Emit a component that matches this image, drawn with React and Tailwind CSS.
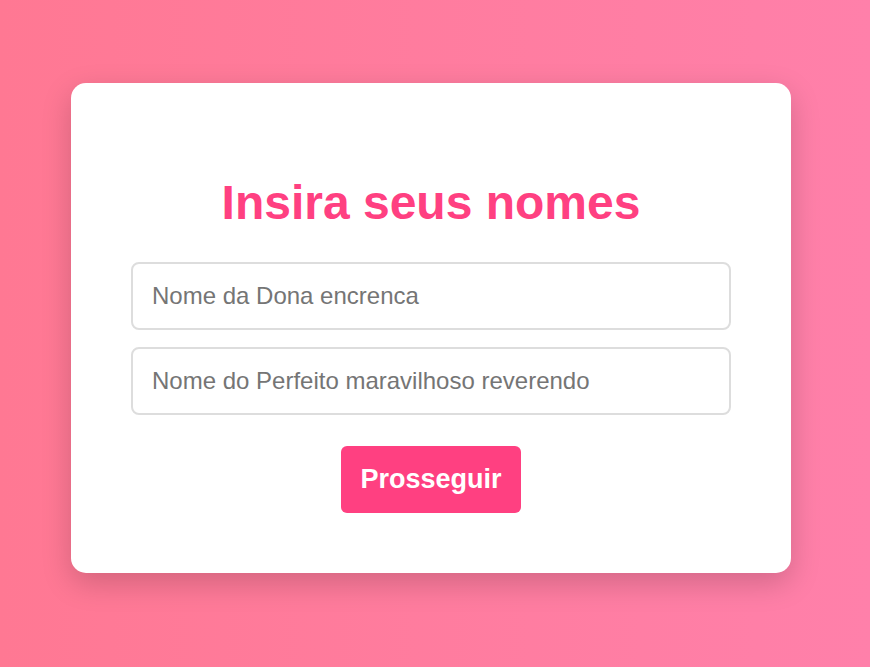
import React, { useState } from "react";

export default function App() {
  const [dona, setDona] = useState("");
  const [reverendo, setReverendo] = useState("");

  return (
    <div className="font-['Liberation_Sans',Arial,sans-serif] h-[667px] w-full bg-gradient-to-r from-[#ff7893] to-[#ff80aa] pt-[83px] pl-[71px]">
      {/* Card */}
      <div className="w-[720px] h-[490px] bg-white rounded-[15px] shadow-[0_10px_30px_rgba(0,0,0,0.18)] px-[60px] pt-[92px] pb-[60px] flex flex-col items-center">
        <h1 className="text-[48px] leading-[55px] font-bold text-[#ff4081] text-center">
          Insira seus nomes
        </h1>

        <input
          type="text"
          value={dona}
          onChange={(e) => setDona(e.target.value)}
          placeholder="Nome da Dona encrenca"
          className="mt-[32px] w-[600px] h-[68px] border-[2.5px] border-[#dddddd] rounded-[8px] px-[19px] text-[24px] text-[#333] placeholder:text-[#757575] outline-none"
        />
        <input
          type="text"
          value={reverendo}
          onChange={(e) => setReverendo(e.target.value)}
          placeholder="Nome do Perfeito maravilhoso reverendo"
          className="mt-[17px] w-[600px] h-[68px] border-[2.5px] border-[#dddddd] rounded-[8px] px-[19px] text-[24px] text-[#333] placeholder:text-[#757575] outline-none"
        />

        <button className="mt-[31px] h-[67px] px-[19px] bg-[#ff4081] text-white text-[27px] font-bold rounded-[6px]">
          Prosseguir
        </button>
      </div>
    </div>
  );
}
